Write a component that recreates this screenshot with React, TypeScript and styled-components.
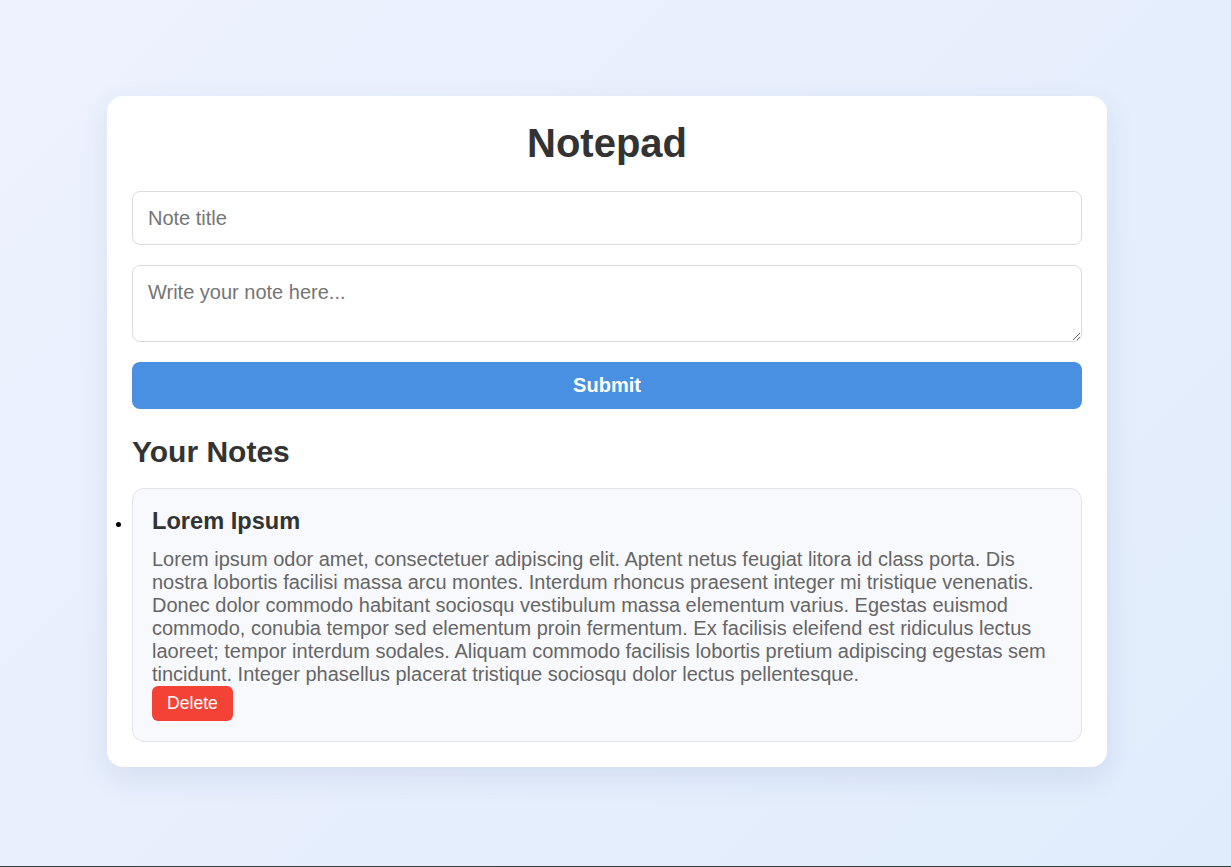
import { useState } from 'react';
import styled, { createGlobalStyle } from 'styled-components';

const GlobalStyle = createGlobalStyle`
  html, body {
    margin: 0;
    padding: 0;
  }
  body {
    font-family: 'Liberation Sans', Arial, sans-serif;
    background: #3c3c3c;
  }
`;

const Page = styled.div`
  min-height: calc(100vh - 1px);
  box-sizing: border-box;
  background: linear-gradient(135deg, #eef2fe 0%, #e0ecfc 100%);
  display: flex;
  justify-content: center;
  align-items: flex-start;
  padding: 96px 17px 0 0;
`;

const Card = styled.div`
  width: 1000px;
  box-sizing: border-box;
  background: #fff;
  border-radius: 16px;
  padding: 24px 25px 25px;
  box-shadow: 0 10px 30px rgba(40, 70, 130, 0.1);
`;

const Title = styled.h1`
  margin: 0 0 25px;
  text-align: center;
  font-size: 40px;
  line-height: 46px;
  font-weight: 700;
  color: #333;
`;

const Form = styled.form`
  display: flex;
  flex-direction: column;
  gap: 20px;
`;

const fieldCss = `
  width: 100%;
  box-sizing: border-box;
  border: 1px solid #ddd;
  border-radius: 8px;
  padding: 15px;
  font-family: 'Liberation Sans', Arial, sans-serif;
  font-size: 20px;
  color: #333;
  background: #fff;
  &::placeholder {
    color: #757575;
  }
  &:focus {
    outline: none;
    border-color: #4a90e2;
  }
`;

const TitleInput = styled.input`
  ${fieldCss}
  height: 54px;
`;

const BodyInput = styled.textarea`
  ${fieldCss}
  display: block;
  height: 77px;
  resize: vertical;
`;

const SubmitButton = styled.button`
  height: 47px;
  border: none;
  border-radius: 8px;
  background: #4a90e2;
  color: #fff;
  font-family: 'Liberation Sans', Arial, sans-serif;
  font-size: 20px;
  font-weight: 700;
  cursor: pointer;
`;

const SectionTitle = styled.h2`
  margin: 25px 0 19px;
  font-size: 30px;
  line-height: 35px;
  font-weight: 700;
  color: #333;
`;

const NoteList = styled.ul`
  margin: 0;
  padding: 0;
  list-style: disc;
  color: #000;
`;

const NoteItem = styled.li`
  background: #f7f9fc;
  border: 1px solid #e1e5eb;
  border-radius: 12px;
  padding: 19px 20px 20px 19px;
  & + & {
    margin-top: 16px;
  }
`;

const NoteTitle = styled.h3`
  margin: 0 0 13px;
  font-size: 23.6px;
  font-weight: 700;
  color: #333;
`;

const NoteBody = styled.p`
  margin: 0;
  font-size: 20px;
  line-height: 23px;
  color: #666;
`;

const DeleteButton = styled.button`
  display: block;
  margin-top: 0;
  padding: 7px 15px;
  border: none;
  border-radius: 6px;
  background: #f44336;
  color: #fff;
  font-family: 'Liberation Sans', Arial, sans-serif;
  font-size: 17.6px;
  cursor: pointer;
`;

type Note = { id: number; title: string; body: string };

const initialNotes: Note[] = [
  {
    id: 1,
    title: 'Lorem Ipsum',
    body: 'Lorem ipsum odor amet, consectetuer adipiscing elit. Aptent netus feugiat litora id class porta. Dis nostra lobortis facilisi massa arcu montes. Interdum rhoncus praesent integer mi tristique venenatis. Donec dolor commodo habitant sociosqu vestibulum massa elementum varius. Egestas euismod commodo, conubia tempor sed elementum proin fermentum. Ex facilisis eleifend est ridiculus lectus laoreet; tempor interdum sodales. Aliquam commodo facilisis lobortis pretium adipiscing egestas sem tincidunt. Integer phasellus placerat tristique sociosqu dolor lectus pellentesque.',
  },
];

export default function App() {
  const [notes, setNotes] = useState<Note[]>(initialNotes);
  const [title, setTitle] = useState('');
  const [body, setBody] = useState('');

  const submit = (e: React.FormEvent) => {
    e.preventDefault();
    if (!title.trim() && !body.trim()) return;
    setNotes([...notes, { id: Date.now(), title, body }]);
    setTitle('');
    setBody('');
  };

  return (
    <>
      <GlobalStyle />
      <Page>
        <Card>
          <Title>Notepad</Title>
          <Form onSubmit={submit}>
            <TitleInput
              placeholder="Note title"
              value={title}
              onChange={(e) => setTitle(e.target.value)}
            />
            <BodyInput
              placeholder="Write your note here..."
              value={body}
              onChange={(e) => setBody(e.target.value)}
            />
            <SubmitButton type="submit">Submit</SubmitButton>
          </Form>
          <SectionTitle>Your Notes</SectionTitle>
          <NoteList>
            {notes.map((n) => (
              <NoteItem key={n.id}>
                <NoteTitle>{n.title}</NoteTitle>
                <NoteBody>{n.body}</NoteBody>
                <DeleteButton onClick={() => setNotes(notes.filter((x) => x.id !== n.id))}>
                  Delete
                </DeleteButton>
              </NoteItem>
            ))}
          </NoteList>
        </Card>
      </Page>
    </>
  );
}
